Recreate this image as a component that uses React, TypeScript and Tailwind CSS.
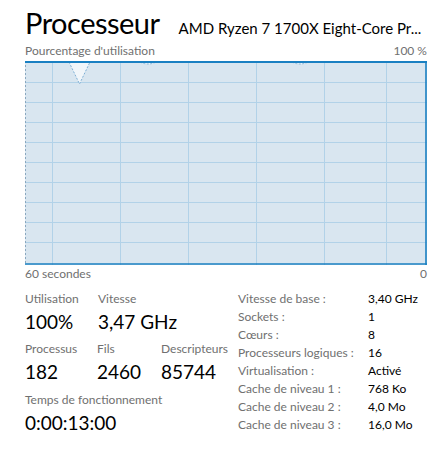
const gridX = [52, 120, 188, 256, 324, 386]
const gridY = [82, 102, 122, 142, 162, 182, 202, 222, 242]

const specs: [string, string][] = [
  ['Vitesse de base :', '3,40 GHz'],
  ['Sockets :', '1'],
  ['Cœurs :', '8'],
  ['Processeurs logiques :', '16'],
  ['Virtualisation :', 'Activé'],
  ['Cache de niveau 1 :', '768 Ko'],
  ['Cache de niveau 2 :', '4,0 Mo'],
  ['Cache de niveau 3 :', '16,0 Mo'],
]

function Stat({ label, value, className }: { label: string; value: string; className?: string }) {
  return (
    <div className={className}>
      <div className="text-[12px] leading-[16px] text-[#707070]">{label}</div>
      <div className="mt-[3px] text-[19px] leading-[24px] text-black">{value}</div>
    </div>
  )
}

function CpuGraph() {
  // viewBox uses page coordinates, graph starts at (25, 61)
  return (
    <svg width="402" height="204" viewBox="25 61 402 204" className="block">
      <rect x="25" y="61" width="402" height="204" fill="#d9e6f0" />
      {gridY.map((y) => (
        <line key={y} x1="25" x2="427" y1={y + 0.5} y2={y + 0.5} stroke="#b2d2e8" strokeWidth="1" />
      ))}
      {gridX.map((x) => (
        <line key={x} x1={x + 0.5} x2={x + 0.5} y1="61" y2="265" stroke="#b2d2e8" strokeWidth="1" />
      ))}
      <polygon points="69,62 79.5,84 90,62" fill="#f1f6fa" stroke="#7fb0d5" strokeWidth="1" strokeDasharray="2 1.5" />
      <path d="M140 62 Q148 66 156 62" fill="#eef4f9" stroke="#8ab8d9" strokeWidth="1" strokeDasharray="2 1.5" />
      <path d="M292 62 Q300 66 308 62" fill="#eef4f9" stroke="#8ab8d9" strokeWidth="1" strokeDasharray="2 1.5" />
      <line x1="25.5" x2="25.5" y1="61" y2="265" stroke="#8aa8c0" strokeWidth="1" strokeDasharray="2 2" />
      <line x1="25" x2="427" y1="62" y2="62" stroke="#1a80c2" strokeWidth="2" />
      <line x1="426" x2="426" y1="61" y2="265" stroke="#1a80c2" strokeWidth="1.6" />
      <line x1="25" x2="427" y1="264" y2="264" stroke="#1a80c2" strokeWidth="1.6" />
    </svg>
  )
}

export default function App() {
  return (
    <div className="w-[443px] h-[457px] bg-white overflow-hidden pl-[25px] pr-[16px] font-['Lato','Noto_Sans',sans-serif]">
      <div className="flex items-baseline pt-[5px] h-[43px]">
        <span className="text-[29px] tracking-[-0.5px] leading-[36px] text-black">Processeur</span>
        <span className="ml-[19px] text-[15px] leading-[20px] text-black whitespace-nowrap">AMD Ryzen 7 1700X Eight-Core Pr...</span>
      </div>
      <div className="flex justify-between text-[12px] leading-[16px] text-[#707070]">
        <span>Pourcentage d'utilisation</span>
        <span>100 %</span>
      </div>
      <div className="mt-[2px]">
        <CpuGraph />
      </div>
      <div className="flex justify-between text-[12px] leading-[16px] text-[#707070] mt-[1px]">
        <span>60 secondes</span>
        <span>0</span>
      </div>
      <div className="flex mt-[9px]">
        <div className="w-[213px]">
          <div className="flex">
            <Stat label="Utilisation" value="100%" className="w-[73px]" />
            <Stat label="Vitesse" value="3,47 GHz" />
          </div>
          <div className="flex mt-[7px]">
            <Stat label="Processus" value="182" className="w-[72px]" />
            <Stat label="Fils" value="2460" className="w-[64px]" />
            <Stat label="Descripteurs" value="85744" />
          </div>
          <Stat label="Temps de fonctionnement" value="0:00:13:00" className="mt-[8px]" />
        </div>
        <div className="text-[12px] leading-[18px] -mt-[1px]">
          {specs.map(([k, v]) => (
            <div key={k} className="flex">
              <span className="w-[130px] text-[#707070]">{k}</span>
              <span className="text-black">{v}</span>
            </div>
          ))}
        </div>
      </div>
    </div>
  )
}
